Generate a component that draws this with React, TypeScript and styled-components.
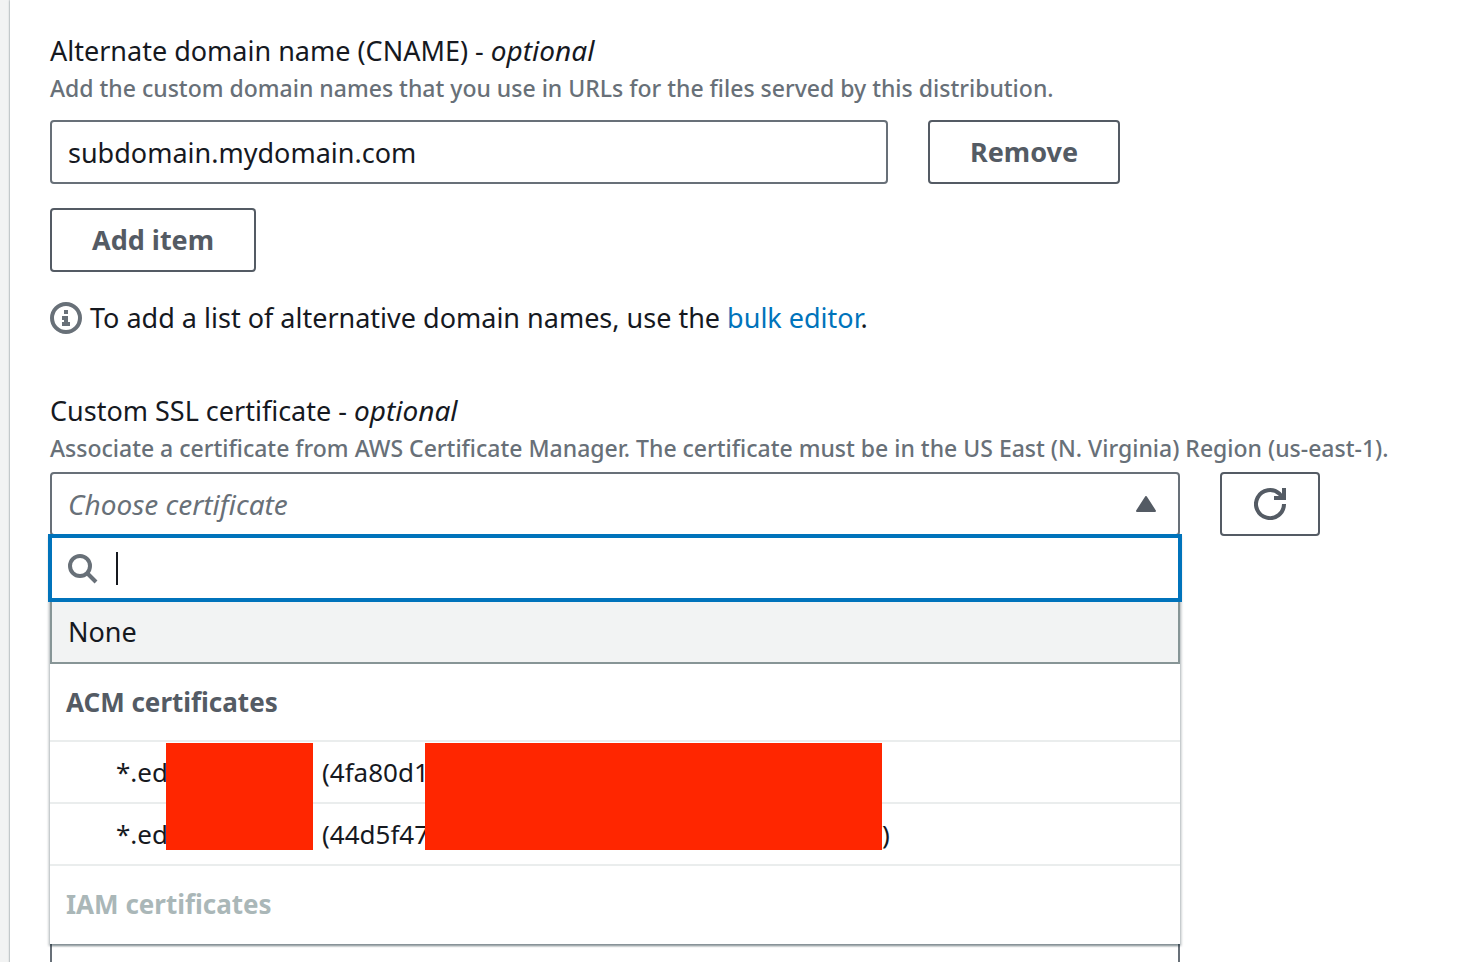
import React from "react";
import styled, { createGlobalStyle, css } from "styled-components";

const GlobalStyle = createGlobalStyle`
  *, *::before, *::after { box-sizing: border-box; }
  html { scrollbar-width: none; }
  body {
    margin: 0;
    background: #f2f3f3;
    color: #16191f;
    font-family: "Noto Sans", "Open Sans", sans-serif;
    font-size: 27px;
    line-height: 44px;
  }
  button, input, select { font: inherit; color: inherit; margin: 0; }
`;

const Page = styled.main`
  min-height: 100vh;
  padding-left: 10px;
`;

const Panel = styled.section`
  min-height: 100vh;
  padding: 28px 32px 0 40px;
  background: #fff;
  box-shadow: 0 0 2px rgba(0, 28, 36, 0.6);
`;

const Field = styled.div`
  display: flex;
  flex-direction: column;
  align-items: flex-start;
  & + & { margin-top: 48px; }
`;

const Label = styled.label`
  height: 44px;
  white-space: nowrap;
  em { font-size: 28px; }
`;

const Hint = styled.p<{ $gap: number }>`
  margin: 0 0 ${(p) => p.$gap}px;
  color: #687078;
  font-size: 23px;
  font-weight: 500;
  line-height: 32px;
  white-space: nowrap;
`;

const Row = styled.div`
  display: flex;
  gap: 40px;
  width: 100%;
`;

const TextInput = styled.input`
  flex: 1;
  min-width: 0;
  max-width: 838px;
  height: 64px;
  padding: 0 16px;
  border: 2px solid #687078;
  border-radius: 4px;
  background: #fff;
  outline: none;
`;

const Button = styled.button`
  display: flex;
  align-items: center;
  justify-content: center;
  flex: none;
  height: 64px;
  padding: 0 40px;
  border: 2px solid #545b64;
  border-radius: 4px;
  background: #fff;
  color: #545b64;
  font-weight: 700;
`;

const AddButton = styled(Button)`
  margin: 24px 0;
`;

const IconButton = styled(Button)`
  width: 100px;
  padding: 0;
`;

const Info = styled.p`
  display: flex;
  align-items: center;
  gap: 8px;
  margin: 0;
  white-space: nowrap;
`;

const Link = styled.a`
  color: #0073bb;
  text-decoration: none;
`;

const SelectWrap = styled.div`
  position: relative;
  flex: 1;
  min-width: 0;
  max-width: 1130px;
`;

const Trigger = styled.select`
  display: block;
  appearance: none;
  width: 100%;
  height: 64px;
  padding: 0 16px;
  border: 2px solid #687078;
  border-radius: 4px;
  background: #fff;
  color: #687078;
  font-size: 28px;
  font-style: italic;
  outline: none;
`;

const Arrow = styled.svg`
  position: absolute;
  top: 24px;
  right: 24px;
  pointer-events: none;
`;

const Dropdown = styled.div`
  position: absolute;
  top: 62px;
  left: 0;
  right: 0;
  z-index: 1;
  background: #fff;
  box-shadow: 0 2px 2px rgba(0, 28, 36, 0.3), 2px 2px 2px rgba(0, 28, 36, 0.15),
    -2px 2px 2px rgba(0, 28, 36, 0.15);
`;

const SearchBox = styled.div`
  display: flex;
  align-items: center;
  height: 68px;
  margin: 0 -2px;
  padding: 0 14px;
  border: 4px solid #0073bb;
  background: #fff;
`;

const Caret = styled.span`
  flex: none;
  width: 2px;
  height: 33px;
  margin-left: 18px;
  background: #16191f;
`;

const SearchInput = styled.input`
  flex: 1;
  min-width: 0;
  padding: 0;
  border: 0;
  background: transparent;
  outline: none;
`;

const List = styled.ul`
  margin: 0;
  padding: 0;
  list-style: none;
`;

const NoneOption = styled.li`
  height: 62px;
  padding: 8px 16px;
  border: solid #879596;
  border-width: 0 2px 2px;
  background: #f2f3f3;
`;

const GroupTitle = styled.div<{ $disabled?: boolean }>`
  padding: 16px;
  font-size: 26px;
  font-weight: 700;
  color: ${(p) => (p.$disabled ? "#aab7b8" : "#545b64")};
`;

const Group = styled.li`
  position: relative;
  ${GroupTitle} { height: 76px; }
  & + & { border-top: 2px solid #eaeded; }
  & + & ${GroupTitle} { height: 78px; }
`;

const Certificate = styled.li`
  display: grid;
  grid-template-columns: 206px 560px auto;
  height: 62px;
  padding: 8px 66px;
  border-top: 2px solid #eaeded;
  font-size: 26px;
`;

const redaction = css`
  position: absolute;
  top: 79px;
  height: 107px;
  background: #ff2600;
`;

const NameRedaction = styled.span`
  ${redaction}
  left: 116px;
  width: 147px;
`;

const IdRedaction = styled.span`
  ${redaction}
  left: 375px;
  width: 457px;
`;

const NextBox = styled.div`
  width: 100%;
  max-width: 1130px;
  height: 64px;
  margin-top: 384px;
  border: 2px solid #687078;
  border-radius: 4px;
`;

const InfoIcon = () => (
  <svg width="32" height="32" viewBox="0 0 32 32" fill="none" aria-hidden="true">
    <circle cx="16" cy="16" r="14" stroke="#687078" strokeWidth="4" />
    <path d="M14 8h4v4h-4zM12 14h6v6h2v4h-8v-4h2v-2h-2z" fill="#687078" />
  </svg>
);

const SearchIcon = () => (
  <svg width="32" height="32" viewBox="0 0 32 32" fill="none" aria-hidden="true">
    <circle cx="14" cy="14" r="10" stroke="#687078" strokeWidth="4" />
    <path d="M21 21l9 9" stroke="#687078" strokeWidth="4" />
  </svg>
);

const RefreshIcon = () => (
  <svg width="32" height="32" viewBox="0 0 32 32" fill="none" aria-hidden="true">
    <path d="M30 16a14 14 0 1 1-4.500-10.200L29 10" stroke="#545b64" strokeWidth="4" />
    <path d="M20 10h10V0" stroke="#545b64" strokeWidth="4" />
  </svg>
);

const certificates = [
  { name: "*.ed", id: "(4fa80d1", end: "" },
  { name: "*.ed", id: "(44d5f47", end: ")" },
];

export default function App() {
  return (
    <Page>
      <GlobalStyle />
      <Panel>
        <Field>
          <Label htmlFor="cname">
            Alternate domain name (CNAME) - <em>optional</em>
          </Label>
          <Hint $gap={16}>
            Add the custom domain names that you use in URLs for the files served by this distribution.
          </Hint>
          <Row>
            <TextInput id="cname" type="text" defaultValue="subdomain.mydomain.com" />
            <Button type="button">Remove</Button>
          </Row>
          <AddButton type="button">Add item</AddButton>
          <Info>
            <InfoIcon />
            <span>
              To add a list of alternative domain names, use the <Link href="#bulk">bulk editor</Link>.
            </span>
          </Info>
        </Field>

        <Field>
          <Label htmlFor="certificate">
            Custom SSL certificate - <em>optional</em>
          </Label>
          <Hint $gap={8}>
            Associate a certificate from AWS Certificate Manager. The certificate must be in the US East (N. Virginia) Region (us-east-1).
          </Hint>
          <Row>
            <SelectWrap>
              <Trigger id="certificate">
                <option>Choose certificate</option>
              </Trigger>
              <Arrow width="20" height="16" viewBox="0 0 20 16" aria-hidden="true">
                <path d="M10 1L19 15H1z" fill="#545b64" stroke="#545b64" strokeWidth="2" strokeLinejoin="round" />
              </Arrow>
              <Dropdown>
                <SearchBox>
                  <SearchIcon />
                  <Caret />
                  <SearchInput type="text" aria-label="Search certificates" />
                </SearchBox>
                <List>
                  <NoneOption>None</NoneOption>
                  <Group>
                    <GroupTitle>ACM certificates</GroupTitle>
                    <List>
                      {certificates.map((c) => (
                        <Certificate key={c.id}>
                          <span>{c.name}</span>
                          <span>{c.id}</span>
                          <span>{c.end}</span>
                        </Certificate>
                      ))}
                    </List>
                    <NameRedaction />
                    <IdRedaction />
                  </Group>
                  <Group>
                    <GroupTitle $disabled>IAM certificates</GroupTitle>
                  </Group>
                </List>
              </Dropdown>
            </SelectWrap>
            <IconButton type="button" aria-label="Refresh certificates">
              <RefreshIcon />
            </IconButton>
          </Row>
        </Field>
        <NextBox />
      </Panel>
    </Page>
  );
}
